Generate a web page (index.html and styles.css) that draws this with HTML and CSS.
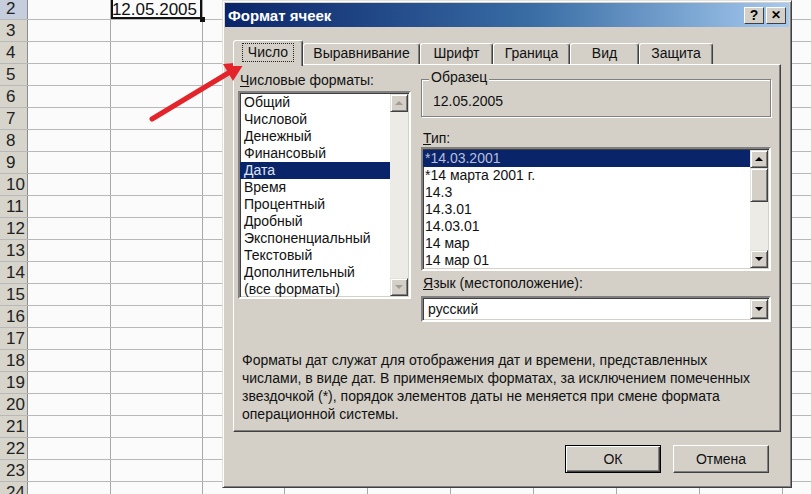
FILE: index.html
```html
<!DOCTYPE html>
<html lang="ru">
<head>
    <meta charset="UTF-8">
    <title>Формат ячеек</title>
    <link rel="stylesheet" href="styles.css">
</head>
<body>
    <div class="sheet">
        <div class="row sel"><div class="rh">2</div><div class="c a"></div><div class="c b active">12.05.2005</div><div class="c x"></div><div class="c"></div><div class="c"></div><div class="c"></div><div class="c"></div><div class="c"></div><div class="c"></div><div class="c"></div></div>
        <div class="row"><div class="rh">3</div><div class="c a"></div><div class="c b"></div><div class="c x"></div><div class="c"></div><div class="c"></div><div class="c"></div><div class="c"></div><div class="c"></div><div class="c"></div><div class="c"></div></div>
        <div class="row"><div class="rh">4</div><div class="c a"></div><div class="c b"></div><div class="c x"></div><div class="c"></div><div class="c"></div><div class="c"></div><div class="c"></div><div class="c"></div><div class="c"></div><div class="c"></div></div>
        <div class="row"><div class="rh">5</div><div class="c a"></div><div class="c b"></div><div class="c x"></div><div class="c"></div><div class="c"></div><div class="c"></div><div class="c"></div><div class="c"></div><div class="c"></div><div class="c"></div></div>
        <div class="row"><div class="rh">6</div><div class="c a"></div><div class="c b"></div><div class="c x"></div><div class="c"></div><div class="c"></div><div class="c"></div><div class="c"></div><div class="c"></div><div class="c"></div><div class="c"></div></div>
        <div class="row"><div class="rh">7</div><div class="c a"></div><div class="c b"></div><div class="c x"></div><div class="c"></div><div class="c"></div><div class="c"></div><div class="c"></div><div class="c"></div><div class="c"></div><div class="c"></div></div>
        <div class="row"><div class="rh">8</div><div class="c a"></div><div class="c b"></div><div class="c x"></div><div class="c"></div><div class="c"></div><div class="c"></div><div class="c"></div><div class="c"></div><div class="c"></div><div class="c"></div></div>
        <div class="row"><div class="rh">9</div><div class="c a"></div><div class="c b"></div><div class="c x"></div><div class="c"></div><div class="c"></div><div class="c"></div><div class="c"></div><div class="c"></div><div class="c"></div><div class="c"></div></div>
        <div class="row"><div class="rh">10</div><div class="c a"></div><div class="c b"></div><div class="c x"></div><div class="c"></div><div class="c"></div><div class="c"></div><div class="c"></div><div class="c"></div><div class="c"></div><div class="c"></div></div>
        <div class="row"><div class="rh">11</div><div class="c a"></div><div class="c b"></div><div class="c x"></div><div class="c"></div><div class="c"></div><div class="c"></div><div class="c"></div><div class="c"></div><div class="c"></div><div class="c"></div></div>
        <div class="row"><div class="rh">12</div><div class="c a"></div><div class="c b"></div><div class="c x"></div><div class="c"></div><div class="c"></div><div class="c"></div><div class="c"></div><div class="c"></div><div class="c"></div><div class="c"></div></div>
        <div class="row"><div class="rh">13</div><div class="c a"></div><div class="c b"></div><div class="c x"></div><div class="c"></div><div class="c"></div><div class="c"></div><div class="c"></div><div class="c"></div><div class="c"></div><div class="c"></div></div>
        <div class="row"><div class="rh">14</div><div class="c a"></div><div class="c b"></div><div class="c x"></div><div class="c"></div><div class="c"></div><div class="c"></div><div class="c"></div><div class="c"></div><div class="c"></div><div class="c"></div></div>
        <div class="row"><div class="rh">15</div><div class="c a"></div><div class="c b"></div><div class="c x"></div><div class="c"></div><div class="c"></div><div class="c"></div><div class="c"></div><div class="c"></div><div class="c"></div><div class="c"></div></div>
        <div class="row"><div class="rh">16</div><div class="c a"></div><div class="c b"></div><div class="c x"></div><div class="c"></div><div class="c"></div><div class="c"></div><div class="c"></div><div class="c"></div><div class="c"></div><div class="c"></div></div>
        <div class="row"><div class="rh">17</div><div class="c a"></div><div class="c b"></div><div class="c x"></div><div class="c"></div><div class="c"></div><div class="c"></div><div class="c"></div><div class="c"></div><div class="c"></div><div class="c"></div></div>
        <div class="row"><div class="rh">18</div><div class="c a"></div><div class="c b"></div><div class="c x"></div><div class="c"></div><div class="c"></div><div class="c"></div><div class="c"></div><div class="c"></div><div class="c"></div><div class="c"></div></div>
        <div class="row"><div class="rh">19</div><div class="c a"></div><div class="c b"></div><div class="c x"></div><div class="c"></div><div class="c"></div><div class="c"></div><div class="c"></div><div class="c"></div><div class="c"></div><div class="c"></div></div>
        <div class="row"><div class="rh">20</div><div class="c a"></div><div class="c b"></div><div class="c x"></div><div class="c"></div><div class="c"></div><div class="c"></div><div class="c"></div><div class="c"></div><div class="c"></div><div class="c"></div></div>
        <div class="row"><div class="rh">21</div><div class="c a"></div><div class="c b"></div><div class="c x"></div><div class="c"></div><div class="c"></div><div class="c"></div><div class="c"></div><div class="c"></div><div class="c"></div><div class="c"></div></div>
        <div class="row"><div class="rh">22</div><div class="c a"></div><div class="c b"></div><div class="c x"></div><div class="c"></div><div class="c"></div><div class="c"></div><div class="c"></div><div class="c"></div><div class="c"></div><div class="c"></div></div>
        <div class="row"><div class="rh">23</div><div class="c a"></div><div class="c b"></div><div class="c x"></div><div class="c"></div><div class="c"></div><div class="c"></div><div class="c"></div><div class="c"></div><div class="c"></div><div class="c"></div></div>
        <div class="row"><div class="rh">24</div><div class="c a"></div><div class="c b"></div><div class="c x"></div><div class="c"></div><div class="c"></div><div class="c"></div><div class="c"></div><div class="c"></div><div class="c"></div><div class="c"></div></div>
    </div>

    <div class="dialog">
        <div class="titlebar">
            <span class="title">Формат ячеек</span>
            <div class="title-btns">
                <span class="tbtn">?</span>
                <span class="tbtn close">✕</span>
            </div>
        </div>
        <div class="dlg-body">
            <div class="tabs">
                <div class="tab on" style="width:70px"><span class="focus">Число</span></div>
                <div class="tab" style="width:117px">Выравнивание</div>
                <div class="tab" style="width:73px">Шрифт</div>
                <div class="tab" style="width:77px">Граница</div>
                <div class="tab" style="width:69px">Вид</div>
                <div class="tab" style="width:74px">Защита</div>
            </div>
            <div class="panel">
                <div class="cols">
                    <div class="col-left">
                        <div class="lbl"><u>Ч</u>исловые форматы:</div>
                        <div class="listbox fmt-list">
                            <div class="items">
                                <div class="item">Общий</div>
                                <div class="item">Числовой</div>
                                <div class="item">Денежный</div>
                                <div class="item">Финансовый</div>
                                <div class="item picked">Дата</div>
                                <div class="item">Время</div>
                                <div class="item">Процентный</div>
                                <div class="item">Дробный</div>
                                <div class="item">Экспоненциальный</div>
                                <div class="item">Текстовый</div>
                                <div class="item">Дополнительный</div>
                                <div class="item">(все форматы)</div>
                            </div>
                            <div class="vscroll">
                                <div class="sbtn"><span class="tri up off"></span></div>
                                <div class="track"></div>
                                <div class="sbtn"><span class="tri down off"></span></div>
                            </div>
                        </div>
                    </div>
                    <div class="col-right">
                        <div class="group">
                            <div class="legend">Образец</div>
                            <div class="sample">12.05.2005</div>
                        </div>
                        <div class="lbl type-lbl"><u>Т</u>ип:</div>
                        <div class="listbox type-list">
                            <div class="items">
                                <div class="item picked">*14.03.2001</div>
                                <div class="item">*14 марта 2001 г.</div>
                                <div class="item">14.3</div>
                                <div class="item">14.3.01</div>
                                <div class="item">14.03.01</div>
                                <div class="item">14 мар</div>
                                <div class="item">14 мар 01</div>
                            </div>
                            <div class="vscroll">
                                <div class="sbtn"><span class="tri up"></span></div>
                                <div class="thumb"></div>
                                <div class="track"></div>
                                <div class="sbtn"><span class="tri down"></span></div>
                            </div>
                        </div>
                        <div class="lbl lang-lbl"><u>Я</u>зык (местоположение):</div>
                        <div class="combo">
                            <span class="combo-val">русский</span>
                            <div class="sbtn combo-btn"><span class="tri down"></span></div>
                        </div>
                    </div>
                </div>
                <p class="note">Форматы дат служат для отображения дат и времени, представленных<br>числами, в виде дат. В применяемых форматах, за исключением помеченных<br>звездочкой (*), порядок элементов даты не меняется при смене формата<br>операционной системы.</p>
            </div>
            <div class="actions">
                <button class="btn default">ОК</button>
                <button class="btn">Отмена</button>
            </div>
        </div>
    </div>

    <svg class="arrow" width="811" height="494" viewBox="0 0 811 494">
        <line x1="152" y1="119" x2="230" y2="72" stroke="#e3242b" stroke-width="5" stroke-linecap="round"/>
        <polygon points="245,62 233,81 223,64" fill="#e3242b"/>
    </svg>
</body>
</html>
```

FILE: styles.css
```css
body {
    margin: 0;
    width: 811px;
    height: 494px;
    overflow: hidden;
    position: relative;
    background: #fbfbfb;
    font-family: "Liberation Sans", Arial, sans-serif;
}

/* spreadsheet behind the dialog */
.sheet {
    margin-top: -2px;
    overflow: hidden;
}
.row {
    display: flex;
    height: 22px;
    box-sizing: border-box;
    border-bottom: 1px solid #b8b8b8;
}
.rh {
    width: 28px;
    flex: none;
    box-sizing: border-box;
    border-right: 1px solid #8c8c8c;
    background: #d7d5cb;
    color: #222;
    font-size: 17px;
    line-height: 21px;
    padding-left: 6px;
}
.row.sel .rh {
    background: #c6cddc;
}
.c {
    width: 83px;
    flex: none;
    box-sizing: border-box;
    border-right: 1px solid #a8a8a8;
}
.c:last-child {
    flex: 1 1 auto;
    width: auto;
    border-right: none;
}
.c.b { width: 92px; }
.c.x { width: 82px; }
.c.active {
    position: relative;
    box-shadow: inset 0 0 0 2px #111;
    font-size: 17px;
    line-height: 20px;
    padding-top: 2px;
    text-align: right;
    padding-right: 5px;
    color: #111;
}
.c.active::after {
    content: "";
    position: absolute;
    right: -3px;
    bottom: -3px;
    width: 5px;
    height: 5px;
    background: #111;
}

/* dialog window */
.dialog {
    position: absolute;
    left: 222px;
    top: 0;
    width: 570px;
    height: 488px;
    box-sizing: border-box;
    background: #d4d0c8;
    border: 1px solid;
    border-color: #e4e2dc #404040 #404040 #e4e2dc;
    box-shadow: inset 1px 1px 0 #fff, inset -1px -1px 0 #808080;
    padding: 2px;
    font-size: 14px;
    color: #111;
}
.titlebar {
    height: 24px;
    display: flex;
    align-items: center;
    justify-content: space-between;
    background: linear-gradient(to right, #0a246a, #3a6ea5 55%, #a6caf0);
    padding: 0 3px;
}
.title {
    color: #fff;
    font-weight: bold;
    font-size: 15px;
}
.title-btns {
    display: flex;
    gap: 2px;
}
.tbtn {
    width: 20px;
    height: 17px;
    box-sizing: border-box;
    background: #d4d0c8;
    border: 1px solid;
    border-color: #fff #404040 #404040 #fff;
    font-weight: bold;
    font-size: 14px;
    line-height: 15px;
    text-align: center;
    color: #000;
}
.tbtn.close {
    font-size: 12px;
}

.dlg-body {
    padding: 13px 8px 0 8px;
}
.tabs {
    display: flex;
    align-items: flex-end;
    height: 24px;
    position: relative;
    z-index: 1;
}
.tab {
    height: 21px;
    box-sizing: border-box;
    border: 1px solid;
    border-bottom: none;
    border-color: #fff #404040 #404040 #fff;
    box-shadow: inset -1px 0 0 #808080;
    border-radius: 3px 3px 0 0;
    text-align: center;
    line-height: 19px;
    background: #d4d0c8;
}
.tab.on {
    height: 26px;
    margin-bottom: -2px;
    padding-top: 2px;
}
.focus {
    display: inline-block;
    border: 1px dotted #222;
    padding: 0 5px;
    line-height: 17px;
}

.panel {
    height: 368px;
    box-sizing: border-box;
    border: 1px solid;
    border-color: #fff #404040 #404040 #fff;
    box-shadow: inset -1px -1px 0 #808080;
    padding: 7px 9px 0 4px;
}
.cols {
    display: grid;
    grid-template-columns: 173px 350px;
    column-gap: 10px;
    align-items: start;
}
.lbl {
    line-height: 17px;
    padding-left: 2px;
}

.listbox {
    display: flex;
    background: #fff;
    border: 2px solid;
    border-color: #808080 #fff #fff #808080;
    box-shadow: inset 1px 1px 0 #404040, inset -1px -1px 0 #d4d0c8;
}
.fmt-list {
    margin-top: 2px;
    height: 208px;
    box-sizing: border-box;
}
.items {
    flex: 1;
    padding-top: 1px;
}
.item {
    height: 17px;
    line-height: 17px;
    padding-left: 4px;
    white-space: nowrap;
}
.item.picked {
    background: #0a246a;
    color: #dfe4f0;
}
.type-list .item.picked {
    color: #b9bfd9;
}
.vscroll {
    width: 18px;
    display: flex;
    flex-direction: column;
    padding: 1px 1px 1px 0;
}
.track {
    flex: 1;
    background: #ecebe6;
}
.sbtn {
    height: 18px;
    box-sizing: border-box;
    background: #d4d0c8;
    border: 1px solid;
    border-color: #e4e2dc #404040 #404040 #e4e2dc;
    box-shadow: inset 1px 1px 0 #fff, inset -1px -1px 0 #808080;
    display: flex;
    align-items: center;
    justify-content: center;
}
.thumb {
    height: 34px;
    box-sizing: border-box;
    background: #d4d0c8;
    border: 1px solid;
    border-color: #e4e2dc #404040 #404040 #e4e2dc;
    box-shadow: inset 1px 1px 0 #fff, inset -1px -1px 0 #808080;
}
.tri {
    width: 0;
    height: 0;
    border-left: 4px solid transparent;
    border-right: 4px solid transparent;
}
.tri.up { border-bottom: 4px solid #000; }
.tri.down { border-top: 4px solid #000; }
.tri.up.off { border-bottom-color: #a09d96; }
.tri.down.off { border-top-color: #a09d96; }

.group {
    margin-top: 7px;
    height: 38px;
    box-sizing: border-box;
    padding: 0 10px;
    border: 1px solid #808080;
    box-shadow: 1px 1px 0 #fff, inset 1px 1px 0 #fff;
}
.legend {
    width: fit-content;
    margin: -11px 0 0 -3px;
    padding: 0 2px;
    line-height: 17px;
    background: #d4d0c8;
}
.sample {
    margin-top: 7px;
    padding-left: 1px;
    line-height: 17px;
}
.type-lbl {
    margin-top: 13px;
}
.type-list {
    height: 124px;
    box-sizing: border-box;
}
.type-list .items {
    padding-top: 1px;
}
.type-list .item {
    padding-left: 2px;
}
.lang-lbl {
    margin-top: 4px;
}
.combo {
    margin-top: 4px;
    height: 26px;
    box-sizing: border-box;
    display: flex;
    align-items: center;
    justify-content: space-between;
    background: #fff;
    border: 2px solid;
    border-color: #808080 #fff #fff #808080;
    box-shadow: inset 1px 1px 0 #404040, inset -1px -1px 0 #d4d0c8;
    padding: 1px;
}
.combo-val {
    padding-left: 4px;
}
.combo-btn {
    width: 18px;
    height: 20px;
}

.note {
    margin: 29px 0 0 4px;
    line-height: 18px;
    white-space: nowrap;
}

.actions {
    display: flex;
    justify-content: flex-end;
    gap: 12px;
    padding: 13px 12px 0 0;
}
.btn {
    width: 96px;
    height: 28px;
    box-sizing: border-box;
    background: #d4d0c8;
    border: 1px solid;
    border-color: #fff #404040 #404040 #fff;
    box-shadow: inset -1px -1px 0 #808080;
    font-family: "Liberation Sans", Arial, sans-serif;
    font-size: 14px;
    color: #111;
}
.btn.default {
    border: 1px solid #000;
    box-shadow: inset 1px 1px 0 #fff, inset -1px -1px 0 #404040, inset -2px -2px 0 #808080;
}

.arrow {
    position: absolute;
    left: 0;
    top: 0;
    pointer-events: none;
}
```
